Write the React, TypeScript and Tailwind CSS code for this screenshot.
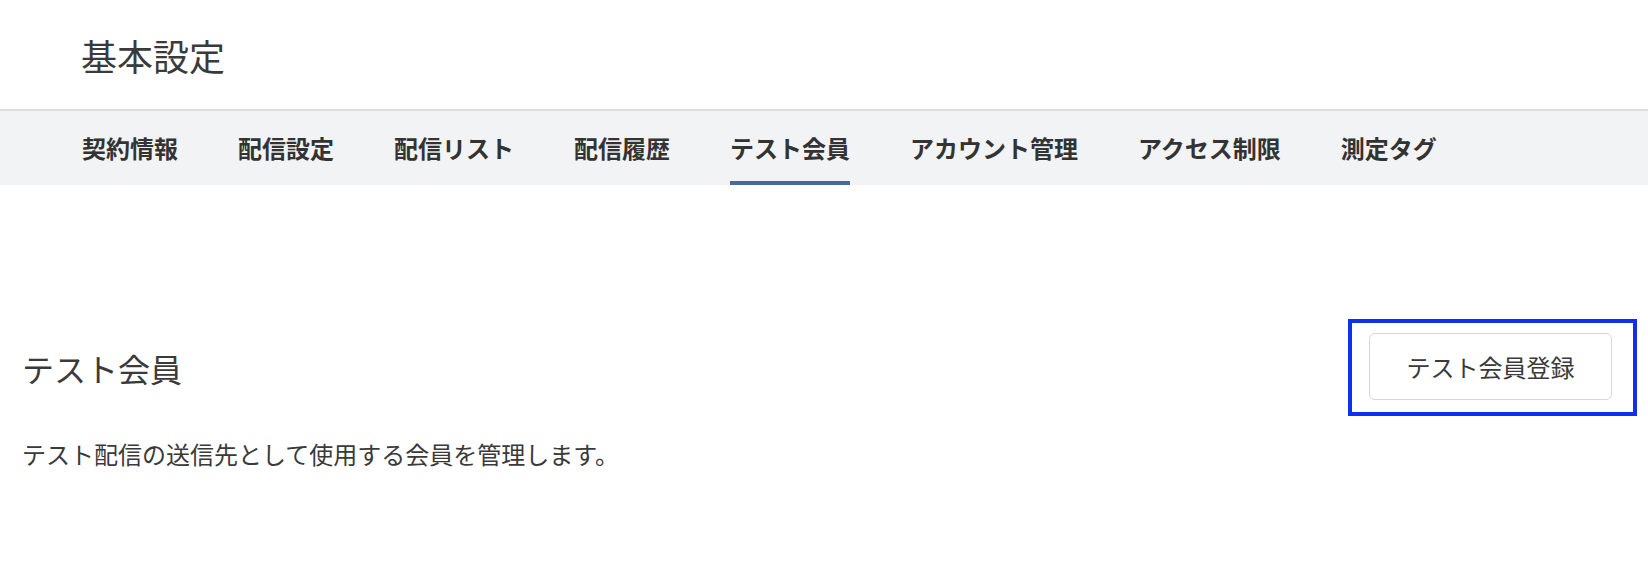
import React from "react";

const tabs = ["契約情報", "配信設定", "配信リスト", "配信履歴", "テスト会員", "アカウント管理", "アクセス制限", "測定タグ"];

export default function App() {
  return (
    <div
      className="w-[1648px] h-[562px] bg-white text-[#333333]"
      style={{ fontFamily: '"Noto Sans CJK JP", "Noto Sans", sans-serif' }}
    >
      <header className="h-[109px] flex items-center pl-[81px] border-b-2 border-[#dcdcdc] box-content">
        <h1 className="text-[36px] leading-none font-normal text-[#3a3a3a]">基本設定</h1>
      </header>
      <nav className="h-[74px] bg-[#f2f3f5] flex pl-[82px] gap-[60px]">
        {tabs.map((t) => (
          <div
            key={t}
            className={
              "h-full flex items-center pt-[4px] border-b-4 text-[24px] leading-none font-bold " +
              (t === "テスト会員" ? "border-[#486a98]" : "border-transparent")
            }
          >
            {t}
          </div>
        ))}
      </nav>
      <main className="pt-[134px]">
        <div className="flex items-center justify-between pl-[22px] pr-[11px]">
          <h2 className="text-[32px] leading-none font-normal text-[#3a3a3a]">テスト会員</h2>
          <div className="border-4 border-[#1030f0] pl-[17px] pr-[21px] pt-[10px] pb-[12px]">
            <button className="w-[243px] h-[67px] rounded-[6px] border-[1.5px] border-[#d6d6d6] bg-white text-[24px] leading-none text-[#3a3a3a]">
              テスト会員登録
            </button>
          </div>
        </div>
        <p className="mt-[26px] pl-[22px] text-[24px] leading-none text-[#3a3a3a]">
          テスト配信の送信先として使用する会員を管理します。
        </p>
      </main>
    </div>
  );
}
